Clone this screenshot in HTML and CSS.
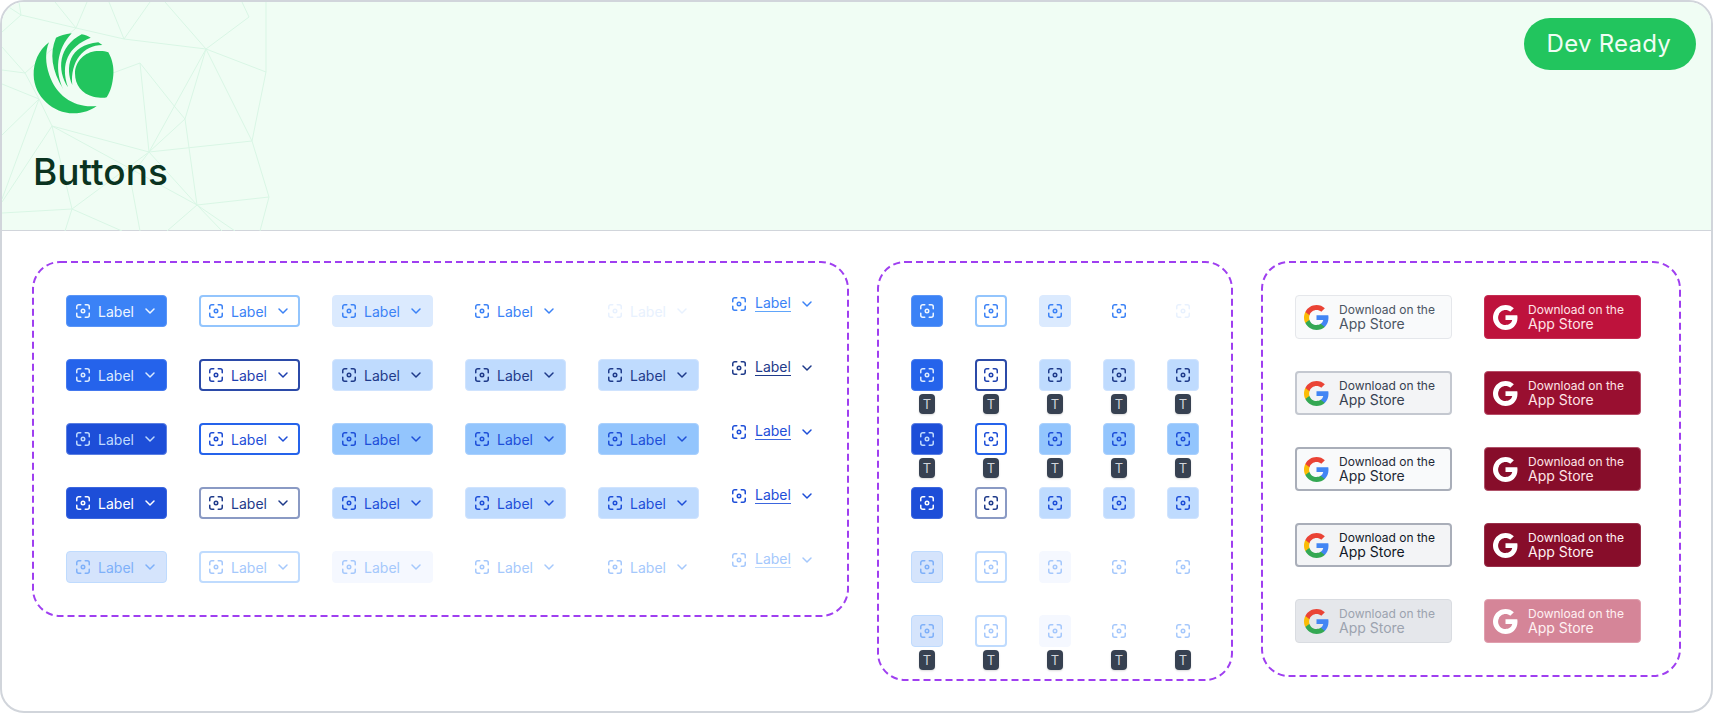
FILE: index.html
```html
<!DOCTYPE html>
<html lang="en">
<head>
  <meta charset="UTF-8" />
  <meta name="viewport" content="width=device-width, initial-scale=1">
  <title>Buttons</title>
  <link rel="stylesheet" href="styles.css">
</head>
<body>
  <svg class="sprite" aria-hidden="true">
    <symbol id="focus" viewBox="0 0 16 16">
      <path d="M1.75 5.75V3.75a2 2 0 0 1 2-2h2M10.25 1.75h2a2 2 0 0 1 2 2v2M14.25 10.25v2a2 2 0 0 1-2 2h-2M5.75 14.25h-2a2 2 0 0 1-2-2v-2" fill="none" stroke="currentColor" stroke-width="1.5" stroke-linecap="round"/>
      <circle cx="8" cy="8" r="1.75" fill="none" stroke="currentColor" stroke-width="1.5"/>
    </symbol>
    <symbol id="chevron" viewBox="0 0 16 16">
      <path d="M4 6l4 4 4-4" fill="none" stroke="currentColor" stroke-width="1.5" stroke-linecap="round" stroke-linejoin="round"/>
    </symbol>
    <symbol id="google" viewBox="1 1 22 22">
      <path fill="#4285f4" d="M22.56 12.25c0-.78-.07-1.53-.2-2.25H12v4.26h5.92c-.26 1.37-1.04 2.53-2.21 3.31v2.77h3.57c2.08-1.92 3.28-4.74 3.28-8.09z"/>
      <path fill="#34a853" d="M12 23c2.97 0 5.46-.98 7.28-2.66l-3.57-2.77c-.98.66-2.23 1.06-3.71 1.06-2.86 0-5.29-1.93-6.16-4.53H2.18v2.84C3.99 20.53 7.7 23 12 23z"/>
      <path fill="#fbbc05" d="M5.84 14.09c-.22-.66-.35-1.36-.35-2.09s.13-1.43.35-2.09V7.07H2.18C1.43 8.55 1 10.22 1 12s.43 3.45 1.18 4.93l2.85-2.22.81-.62z"/>
      <path fill="#ea4335" d="M12 5.38c1.62 0 3.06.56 4.21 1.64l3.15-3.15C17.45 2.09 14.97 1 12 1 7.7 1 3.99 3.47 2.18 7.07l3.66 2.84c.87-2.6 3.3-4.53 6.16-4.53z"/>
    </symbol>
    <symbol id="google-mono" viewBox="1 1 22 22">
      <path fill="currentColor" d="M22.56 12.25c0-.78-.07-1.53-.2-2.25H12v4.26h5.92c-.26 1.37-1.04 2.53-2.21 3.31v2.77h3.57c2.08-1.92 3.28-4.74 3.28-8.09z"/>
      <path fill="currentColor" d="M12 23c2.97 0 5.46-.98 7.28-2.66l-3.57-2.77c-.98.66-2.23 1.06-3.71 1.06-2.86 0-5.29-1.93-6.16-4.53H2.18v2.84C3.99 20.53 7.7 23 12 23z"/>
      <path fill="currentColor" d="M5.84 14.09c-.22-.66-.35-1.36-.35-2.09s.13-1.43.35-2.09V7.07H2.18C1.43 8.55 1 10.22 1 12s.43 3.45 1.18 4.93l2.85-2.22.81-.62z"/>
      <path fill="currentColor" d="M12 5.38c1.62 0 3.06.56 4.21 1.64l3.15-3.15C17.45 2.09 14.97 1 12 1 7.7 1 3.99 3.47 2.18 7.07l3.66 2.84c.87-2.6 3.3-4.53 6.16-4.53z"/>
    </symbol>
  </svg>

  <div class="card">
    <header class="header">
      <svg class="mesh" viewBox="0 0 270 229" aria-hidden="true">
        <path d="M0 30L19 13L74 26L122 37L204 47L264 70L264 0M19 13L17 0M19 13L2 2M74 26L53 0M74 26L85 0M122 37L107 0M122 37L148 0M204 47L163 0M204 47L247 15L240 0M74 26L23 71L0 68M23 71L37 97L0 82M23 71L0 45M37 97L0 133M37 97L0 197M37 97L50 124L147 150L138 61L100 75M138 61L173 105L183 117L147 150L204 47L183 117L195 203L147 150L70 207L50 124L195 203L267 195L250 139L147 150M204 47L250 139L264 70M50 124L0 200M70 207L0 211M70 207L63 229M70 207L120 229M147 150L128 175L138 229M195 203L165 229M195 203L233 229M267 195L258 229M195 203L220 229"/>
      </svg>
      <div class="brand">
        <svg class="logo" viewBox="90 90 261 261" aria-hidden="true">
          <path d="M147 127C115 150 100 190 101 225C102 290 160 340 220 340C250 340 275 330 290 318C225 325 170 290 148 225C136 190 135 155 147 127Z"/>
          <path d="M215 100C195 103 180 107 168 113C148 160 155 210 190 268C165 215 168 150 215 100Z"/>
          <path d="M245 103C255 105 264 108 272 113C205 140 180 190 204 262C170 210 175 140 245 103Z"/>
          <path d="M295 127L307 135C250 135 210 185 217 255C195 205 205 135 295 127Z"/>
          <path d="M325 157C338 180 342 205 340 225C338 250 332 275 320 292C310 295 295 293 280 290C245 282 225 255 225 220C225 185 255 155 290 153C305 152 316 153 325 157Z"/>
        </svg>
        <h1 class="title">Buttons</h1>
      </div>
      <span class="pill">Dev Ready</span>
    </header>

    <main class="content">
      <section class="panel panel-labels">
        <svg class="dash" aria-hidden="true"><rect/></svg>
        <!-- rest -->
        <a class="btn solid rest"><svg class="ico"><use href="#focus"/></svg><span>Label</span><svg class="ico"><use href="#chevron"/></svg></a>
        <a class="btn outline rest"><svg class="ico"><use href="#focus"/></svg><span>Label</span><svg class="ico"><use href="#chevron"/></svg></a>
        <a class="btn soft rest"><svg class="ico"><use href="#focus"/></svg><span>Label</span><svg class="ico"><use href="#chevron"/></svg></a>
        <a class="btn plain rest"><svg class="ico"><use href="#focus"/></svg><span>Label</span><svg class="ico"><use href="#chevron"/></svg></a>
        <a class="btn ghost rest"><svg class="ico"><use href="#focus"/></svg><span>Label</span><svg class="ico"><use href="#chevron"/></svg></a>
        <a class="link rest"><svg class="ico"><use href="#focus"/></svg><span>Label</span><svg class="ico"><use href="#chevron"/></svg></a>
        <!-- hover -->
        <a class="btn solid hover"><svg class="ico"><use href="#focus"/></svg><span>Label</span><svg class="ico"><use href="#chevron"/></svg></a>
        <a class="btn outline hover"><svg class="ico"><use href="#focus"/></svg><span>Label</span><svg class="ico"><use href="#chevron"/></svg></a>
        <a class="btn soft hover"><svg class="ico"><use href="#focus"/></svg><span>Label</span><svg class="ico"><use href="#chevron"/></svg></a>
        <a class="btn soft hover"><svg class="ico"><use href="#focus"/></svg><span>Label</span><svg class="ico"><use href="#chevron"/></svg></a>
        <a class="btn soft hover"><svg class="ico"><use href="#focus"/></svg><span>Label</span><svg class="ico"><use href="#chevron"/></svg></a>
        <a class="link hover"><svg class="ico"><use href="#focus"/></svg><span>Label</span><svg class="ico"><use href="#chevron"/></svg></a>
        <!-- pressed -->
        <a class="btn solid press"><svg class="ico"><use href="#focus"/></svg><span>Label</span><svg class="ico"><use href="#chevron"/></svg></a>
        <a class="btn outline press"><svg class="ico"><use href="#focus"/></svg><span>Label</span><svg class="ico"><use href="#chevron"/></svg></a>
        <a class="btn soft press"><svg class="ico"><use href="#focus"/></svg><span>Label</span><svg class="ico"><use href="#chevron"/></svg></a>
        <a class="btn soft press"><svg class="ico"><use href="#focus"/></svg><span>Label</span><svg class="ico"><use href="#chevron"/></svg></a>
        <a class="btn soft press"><svg class="ico"><use href="#focus"/></svg><span>Label</span><svg class="ico"><use href="#chevron"/></svg></a>
        <a class="link press"><svg class="ico"><use href="#focus"/></svg><span>Label</span><svg class="ico"><use href="#chevron"/></svg></a>
        <!-- focus -->
        <a class="btn solid focus"><svg class="ico"><use href="#focus"/></svg><span>Label</span><svg class="ico"><use href="#chevron"/></svg></a>
        <a class="btn outline focus"><svg class="ico"><use href="#focus"/></svg><span>Label</span><svg class="ico"><use href="#chevron"/></svg></a>
        <a class="btn soft focus"><svg class="ico"><use href="#focus"/></svg><span>Label</span><svg class="ico"><use href="#chevron"/></svg></a>
        <a class="btn soft focus"><svg class="ico"><use href="#focus"/></svg><span>Label</span><svg class="ico"><use href="#chevron"/></svg></a>
        <a class="btn soft focus"><svg class="ico"><use href="#focus"/></svg><span>Label</span><svg class="ico"><use href="#chevron"/></svg></a>
        <a class="link focus"><svg class="ico"><use href="#focus"/></svg><span>Label</span><svg class="ico"><use href="#chevron"/></svg></a>
        <!-- disabled -->
        <a class="btn solid off"><svg class="ico"><use href="#focus"/></svg><span>Label</span><svg class="ico"><use href="#chevron"/></svg></a>
        <a class="btn outline off"><svg class="ico"><use href="#focus"/></svg><span>Label</span><svg class="ico"><use href="#chevron"/></svg></a>
        <a class="btn soft off"><svg class="ico"><use href="#focus"/></svg><span>Label</span><svg class="ico"><use href="#chevron"/></svg></a>
        <a class="btn plain off"><svg class="ico"><use href="#focus"/></svg><span>Label</span><svg class="ico"><use href="#chevron"/></svg></a>
        <a class="btn plain off"><svg class="ico"><use href="#focus"/></svg><span>Label</span><svg class="ico"><use href="#chevron"/></svg></a>
        <a class="link off"><svg class="ico"><use href="#focus"/></svg><span>Label</span><svg class="ico"><use href="#chevron"/></svg></a>
      </section>

      <section class="panel panel-icons">
        <svg class="dash" aria-hidden="true"><rect/></svg>
        <a class="btn square solid rest"><svg class="ico"><use href="#focus"/></svg></a>
        <a class="btn square outline rest"><svg class="ico"><use href="#focus"/></svg></a>
        <a class="btn square soft rest"><svg class="ico"><use href="#focus"/></svg></a>
        <a class="btn square plain rest"><svg class="ico"><use href="#focus"/></svg></a>
        <a class="btn square ghost rest"><svg class="ico"><use href="#focus"/></svg></a>

        <a class="btn square solid hover"><svg class="ico"><use href="#focus"/></svg><span class="tip">T</span></a>
        <a class="btn square outline hover"><svg class="ico"><use href="#focus"/></svg><span class="tip">T</span></a>
        <a class="btn square soft hover"><svg class="ico"><use href="#focus"/></svg><span class="tip">T</span></a>
        <a class="btn square soft hover"><svg class="ico"><use href="#focus"/></svg><span class="tip">T</span></a>
        <a class="btn square soft hover"><svg class="ico"><use href="#focus"/></svg><span class="tip">T</span></a>

        <a class="btn square solid press"><svg class="ico"><use href="#focus"/></svg><span class="tip">T</span></a>
        <a class="btn square outline press"><svg class="ico"><use href="#focus"/></svg><span class="tip">T</span></a>
        <a class="btn square soft press"><svg class="ico"><use href="#focus"/></svg><span class="tip">T</span></a>
        <a class="btn square soft press"><svg class="ico"><use href="#focus"/></svg><span class="tip">T</span></a>
        <a class="btn square soft press"><svg class="ico"><use href="#focus"/></svg><span class="tip">T</span></a>

        <a class="btn square solid focus"><svg class="ico"><use href="#focus"/></svg></a>
        <a class="btn square outline focus"><svg class="ico"><use href="#focus"/></svg></a>
        <a class="btn square soft focus"><svg class="ico"><use href="#focus"/></svg></a>
        <a class="btn square soft focus"><svg class="ico"><use href="#focus"/></svg></a>
        <a class="btn square soft focus"><svg class="ico"><use href="#focus"/></svg></a>

        <a class="btn square solid off"><svg class="ico"><use href="#focus"/></svg></a>
        <a class="btn square outline off"><svg class="ico"><use href="#focus"/></svg></a>
        <a class="btn square soft off"><svg class="ico"><use href="#focus"/></svg></a>
        <a class="btn square plain off"><svg class="ico"><use href="#focus"/></svg></a>
        <a class="btn square plain off"><svg class="ico"><use href="#focus"/></svg></a>

        <a class="btn square solid off"><svg class="ico"><use href="#focus"/></svg><span class="tip">T</span></a>
        <a class="btn square outline off"><svg class="ico"><use href="#focus"/></svg><span class="tip">T</span></a>
        <a class="btn square soft off"><svg class="ico"><use href="#focus"/></svg><span class="tip">T</span></a>
        <a class="btn square plain off"><svg class="ico"><use href="#focus"/></svg><span class="tip">T</span></a>
        <a class="btn square plain off"><svg class="ico"><use href="#focus"/></svg><span class="tip">T</span></a>
      </section>

      <section class="panel panel-stores">
        <svg class="dash" aria-hidden="true"><rect/></svg>
        <a class="store light rest"><svg class="g"><use href="#google"/></svg><span class="store-text"><small>Download on the</small><b>App Store</b></span></a>
        <a class="store brand-red rest"><svg class="g"><use href="#google-mono"/></svg><span class="store-text"><small>Download on the</small><b>App Store</b></span></a>
        <a class="store light hover"><svg class="g"><use href="#google"/></svg><span class="store-text"><small>Download on the</small><b>App Store</b></span></a>
        <a class="store brand-red hover"><svg class="g"><use href="#google-mono"/></svg><span class="store-text"><small>Download on the</small><b>App Store</b></span></a>
        <a class="store light press"><svg class="g"><use href="#google"/></svg><span class="store-text"><small>Download on the</small><b>App Store</b></span></a>
        <a class="store brand-red press"><svg class="g"><use href="#google-mono"/></svg><span class="store-text"><small>Download on the</small><b>App Store</b></span></a>
        <a class="store light focus"><svg class="g"><use href="#google"/></svg><span class="store-text"><small>Download on the</small><b>App Store</b></span></a>
        <a class="store brand-red focus"><svg class="g"><use href="#google-mono"/></svg><span class="store-text"><small>Download on the</small><b>App Store</b></span></a>
        <a class="store light off"><svg class="g"><use href="#google"/></svg><span class="store-text"><small>Download on the</small><b>App Store</b></span></a>
        <a class="store brand-red off"><svg class="g"><use href="#google-mono"/></svg><span class="store-text"><small>Download on the</small><b>App Store</b></span></a>
      </section>
    </main>
  </div>
</body>
</html>
```
FILE: styles.css
```css
* {
  box-sizing: border-box;
}
body {
  margin: 0;
  background: #fff;
  font-family: Inter, "Liberation Sans", sans-serif;
}
.sprite {
  position: absolute;
  width: 0;
  height: 0;
}
.card {
  width: 1713px;
  height: 713px;
  border: 2px solid #d1d5db;
  border-radius: 24px;
  overflow: hidden;
  background: #fff;
}

/* header */
.header {
  position: relative;
  display: flex;
  justify-content: space-between;
  align-items: flex-start;
  height: 229px;
  padding: 16px 15px 0 28px;
  background: #f0fdf4;
  border-bottom: 1px solid #d1d5db;
}
.mesh {
  position: absolute;
  left: 0;
  top: 0;
  width: 270px;
  height: 229px;
}
.mesh path {
  fill: none;
  stroke: #d9f6e5;
  stroke-width: 1;
}
.brand {
  position: relative;
  display: flex;
  flex-direction: column;
  align-items: flex-start;
  padding-top: 12px;
}
.logo {
  width: 87px;
  height: 87px;
}
.logo path {
  fill: #22c55e;
}
.title {
  margin: 33px 0 0 3px;
  font-size: 37px;
  line-height: 44px;
  font-weight: 500;
  color: #0a3320;
}
.pill {
  position: relative;
  height: 52px;
  padding: 0 25px 0 23px;
  border-radius: 26px;
  background: #22c55e;
  color: #f0fdf4;
  font-size: 24px;
  line-height: 52px;
  letter-spacing: 0.25px;
}

/* panels */
.content {
  display: flex;
  align-items: flex-start;
  gap: 28px;
  padding: 30px 30px 0;
}
.panel {
  position: relative;
  display: grid;
  gap: 32px;
  padding: 34px;
}
.dash {
  position: absolute;
  left: 0;
  top: 0;
  width: 100%;
  height: 100%;
  pointer-events: none;
}
.dash rect {
  x: 1px;
  y: 1px;
  width: calc(100% - 2px);
  height: calc(100% - 2px);
  rx: 27px;
  fill: none;
  stroke: #9f3ff0;
  stroke-width: 2;
  stroke-dasharray: 7 4;
}
.panel-labels {
  grid-template-columns: repeat(5, 101px) 84px;
  grid-auto-rows: 32px;
}
.panel-icons {
  grid-template-columns: repeat(5, 32px);
  grid-auto-rows: 32px;
}
.panel-stores {
  flex: 1;
  grid-template-columns: repeat(2, 157px);
  grid-auto-rows: 44px;
}

/* buttons */
.btn,
.link {
  display: flex;
  align-items: center;
  color: var(--fg);
  font-size: 14px;
  line-height: 16px;
}
.btn {
  position: relative;
  justify-content: center;
  gap: 8px;
  height: 32px;
  border: 1px solid var(--line, transparent);
  border-radius: 4px;
  background: var(--bg, transparent);
}
.btn span {
  margin-left: -1px;
  padding-top: 2px;
}
.square {
  width: 32px;
}
.ico {
  flex: none;
  width: 16px;
  height: 16px;
}
.link {
  align-self: start;
  gap: 8px;
}
.link span {
  border-bottom: 1px solid var(--line);
}

.solid.rest { --bg: #3b82f6; --line: #5a95f7; --fg: #eff6ff; }
.solid.hover { --bg: #2563eb; --line: #4378ee; --fg: #dbeafe; }
.solid.press { --bg: #1d4ed8; --line: #5b7fe2; --fg: #bfdbfe; }
.solid.focus { --bg: #1d4ed8; --line: #3b66de; --fg: #fff; }
.solid.off { --bg: #d5e4fc; --line: #bfdbfe; --fg: #7eb0f9; }

.outline { border-width: 2px; background: #fff; }
.outline.rest { --line: #93c5fd; --fg: #3b82f6; }
.outline.hover { --line: #2b4aa8; --fg: #1e40af; }
.outline.press { --line: #2563eb; --fg: #1d4ed8; }
.outline.focus { --line: #8a9ac4; --fg: #1e3a8a; }
.outline.off { --line: #bfdbfe; --fg: #a5c8fc; }

.soft.rest { --bg: #dbeafe; --line: #dbeafe; --fg: #3b82f6; }
.soft.hover { --bg: #bfdbfe; --line: #cfe3fe; --fg: #1e3a8a; }
.soft.press { --bg: #93c5fd; --line: #a9d0fd; --fg: #1d4ed8; }
.soft.focus { --bg: #bfdbfe; --line: #cfe3fe; --fg: #1d4ed8; }
.soft.off { --bg: #f5f8ff; --line: #f5f8ff; --fg: #a5c8fc; }

.plain.rest { --fg: #3b82f6; }
.plain.off { --fg: #a5c8fc; }
.ghost.rest { --fg: #e8f1fe; }

.link.rest { --fg: #3b82f6; --line: #60a5fa; }
.link.hover { --fg: #1e3a8a; --line: #1e3a8a; }
.link.press { --fg: #1d4ed8; --line: #3b66de; }
.link.focus { --fg: #1d4ed8; --line: #3b66de; }
.link.off { --fg: #a5c8fc; --line: #bfdbfe; }

.btn .tip {
  position: absolute;
  left: 7px;
  top: 34px;
  width: 16px;
  height: 20px;
  margin: 0;
  padding: 0;
  border-radius: 4px;
  background: #374151;
  color: #d1d5db;
  font-size: 13px;
  line-height: 20px;
  text-align: center;
  box-shadow: 0 1px 2px rgba(0, 0, 0, 0.15);
}
.outline .tip {
  left: 6px;
  top: 33px;
}

/* store buttons */
.store {
  display: flex;
  align-items: center;
  gap: 10px;
  height: 44px;
  padding: 0 8px;
  border: 1px solid var(--line);
  border-radius: 4px;
  background: var(--bg);
  color: var(--fg);
}
.light.hover,
.light.press,
.light.focus {
  border-width: 2px;
  padding: 0 7px;
}
.g {
  flex: none;
  width: 25px;
  height: 25px;
}
.store-text {
  display: flex;
  flex-direction: column;
  padding-bottom: 2px;
}
.store-text small {
  font-size: 12px;
  line-height: 15px;
}
.store-text b {
  margin-top: -1px;
  font-size: 14px;
  line-height: 15px;
  font-weight: 400;
}
.light.rest { --bg: #f9fafb; --line: #e5e7eb; --fg: #4b5563; }
.light.hover { --bg: #f3f4f6; --line: #c4c8d0; --fg: #374151; }
.light.press { --bg: #f9fafb; --line: #a9aeb9; --fg: #1f2937; }
.light.focus { --bg: #f3f4f6; --line: #a9aeb9; --fg: #111827; }
.light.off { --bg: #e5e7eb; --line: #d9dce1; --fg: #9ca3af; }

.brand-red.rest { --bg: #be123c; --line: #c52c52; --fg: #ffe4e6; }
.brand-red.hover { --bg: #990f30; --line: #b84d67; --fg: #ffe4e6; }
.brand-red.press { --bg: #870d2a; --line: #b05269; --fg: #ffe4e6; }
.brand-red.focus { --bg: #870d2a; --line: #99304a; --fg: #fff1f2; }
.brand-red.off { --bg: #d58598; --line: #e09fae; --fg: #fff1f2; }
.brand-red .g { color: #fff; }
```
